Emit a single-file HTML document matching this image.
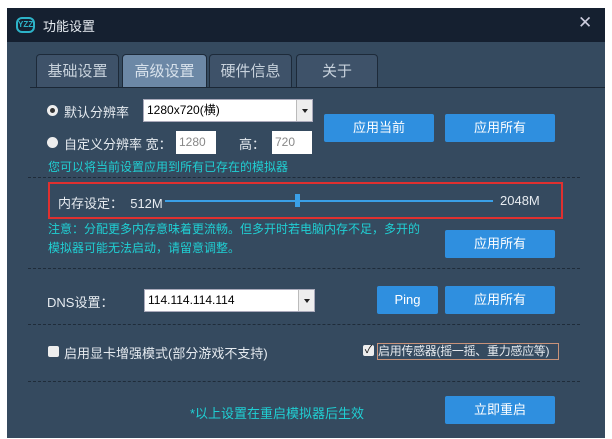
<!DOCTYPE html>
<html><head><meta charset="utf-8"><style>
*{margin:0;padding:0;box-sizing:border-box}
body{width:612px;height:439px;background:#fff;position:relative;overflow:hidden;font-family:"Liberation Sans","Noto Sans CJK SC",sans-serif;font-size:12px;color:#e6ebf0}
.a{position:absolute;white-space:nowrap}
#win{left:7px;top:8px;width:598px;height:430px;background:#354a5f}
#title{left:7px;top:8px;width:598px;height:34px;background:#152030}
.tab{top:54px;height:34px;background:#3e5269;border:1px solid #1d2a39;border-bottom:none;border-radius:4px 4px 0 0;font-size:15px;color:#c8d2dc;text-align:center;line-height:33px}
.btn{background:#2f8fdf;border-radius:2px;color:#fff;font-size:13px;text-align:center;line-height:27px}
.dash{left:28px;width:552px;border-top:1px dashed #1f2c3a;height:0}
.sel{background:#fff;border:1px solid #aab;color:#000;font-size:12px;line-height:21px;padding-left:3px}
.sel i{position:absolute;right:0;top:0;width:16px;height:100%;background:#eee;border-left:1px solid #bbb}
.sel i:after{content:"";position:absolute;left:5px;top:9px;border:3px solid transparent;border-top:4px solid #222}
.inp{background:#fff;color:#888;font-size:12px;line-height:23px;padding-left:3px}
.cy{color:#20cfd3}
.radio{width:11px;height:11px;border-radius:50%;background:#eee}
</style></head><body>
<div class="a" id="win"></div>
<div class="a" id="title"></div>
<div class="a" style="left:16px;top:17px;width:19px;height:16px;border:2px solid #2db3c8;border-radius:6px;color:#2db3c8;font-size:8px;font-weight:bold;line-height:12px;text-align:center">YZZ</div>
<div class="a" style="left:43px;top:16px;font-size:13px;color:#e8edf2">功能设置</div>
<div class="a" style="left:578px;top:13px;font-size:17px;color:#ccd">✕</div>
<div class="a tab" style="left:36px;width:83px">基础设置</div>
<div class="a tab" style="left:122px;width:85px;background:#6c88a6;color:#d8e2ec">高级设置</div>
<div class="a tab" style="left:209px;width:83px">硬件信息</div>
<div class="a tab" style="left:296px;width:82px">关于</div>
<div class="a" style="left:30px;top:87px;width:575px;border-top:1px solid #1b2735"></div>

<div class="a radio" style="left:47px;top:105px"><div style="margin:3px;width:5px;height:5px;border-radius:50%;background:#333"></div></div>
<div class="a" style="left:64px;top:102px;font-size:13px">默认分辨率</div>
<div class="a sel" style="left:143px;top:99px;width:170px;height:23px">1280x720(横)<i></i></div>
<div class="a radio" style="left:47px;top:137px"></div>
<div class="a" style="left:64px;top:134px;font-size:13px">自定义分辨率 宽：</div>
<div class="a inp" style="left:176px;top:131px;width:40px;height:23px">1280</div>
<div class="a" style="left:239px;top:134px;font-size:13px">高：</div>
<div class="a inp" style="left:272px;top:131px;width:40px;height:23px">720</div>
<div class="a btn" style="left:324px;top:114px;width:110px;height:28px">应用当前</div>
<div class="a btn" style="left:445px;top:114px;width:110px;height:28px">应用所有</div>
<div class="a cy" style="left:48px;top:158px">您可以将当前设置应用到所有已存在的模拟器</div>
<div class="a dash" style="top:177px"></div>

<div class="a" style="left:48px;top:182px;width:515px;height:37px;border:2px solid #e0302f"></div>
<div class="a" style="left:58px;top:193px;font-size:13px">内存设定：&nbsp; 512M</div>
<div class="a" style="left:165px;top:200px;width:328px;height:2px;background:#3aa0e8"></div>
<div class="a" style="left:295px;top:194px;width:5px;height:13px;background:#3aa0e8"></div>
<div class="a" style="left:500px;top:193px;font-size:13px">2048M</div>
<div class="a cy" style="left:48px;top:220px;line-height:19px">注意：分配更多内存意味着更流畅。但多开时若电脑内存不足，多开的<br>模拟器可能无法启动，请留意调整。</div>
<div class="a btn" style="left:445px;top:230px;width:110px;height:28px">应用所有</div>
<div class="a dash" style="top:268px"></div>

<div class="a" style="left:47px;top:292px;font-size:13px">DNS设置：</div>
<div class="a sel" style="left:144px;top:289px;width:171px;height:23px">114.114.114.114<i></i></div>
<div class="a btn" style="left:377px;top:286px;width:61px;height:28px">Ping</div>
<div class="a btn" style="left:445px;top:286px;width:110px;height:28px">应用所有</div>
<div class="a dash" style="top:324px"></div>

<div class="a" style="left:48px;top:346px;width:11px;height:11px;background:#eee;border-radius:2px"></div>
<div class="a" style="left:64px;top:343px;font-size:13px">启用显卡增强模式(部分游戏不支持)</div>
<div class="a" style="left:363px;top:345px;width:11px;height:11px;background:#eee;border-radius:2px;color:#111;font-size:11px;line-height:11px;text-align:center">✓</div>
<div class="a" style="left:377px;top:343px;width:182px;height:17px;border:1px solid #c9937a;font-size:12px;line-height:15px;letter-spacing:-0.3px">启用传感器(摇一摇、重力感应等)</div>
<div class="a dash" style="top:381px"></div>

<div class="a cy" style="left:190px;top:403px;font-size:13px">*以上设置在重启模拟器后生效</div>
<div class="a btn" style="left:445px;top:396px;width:110px;height:28px">立即重启</div>
</body></html>
